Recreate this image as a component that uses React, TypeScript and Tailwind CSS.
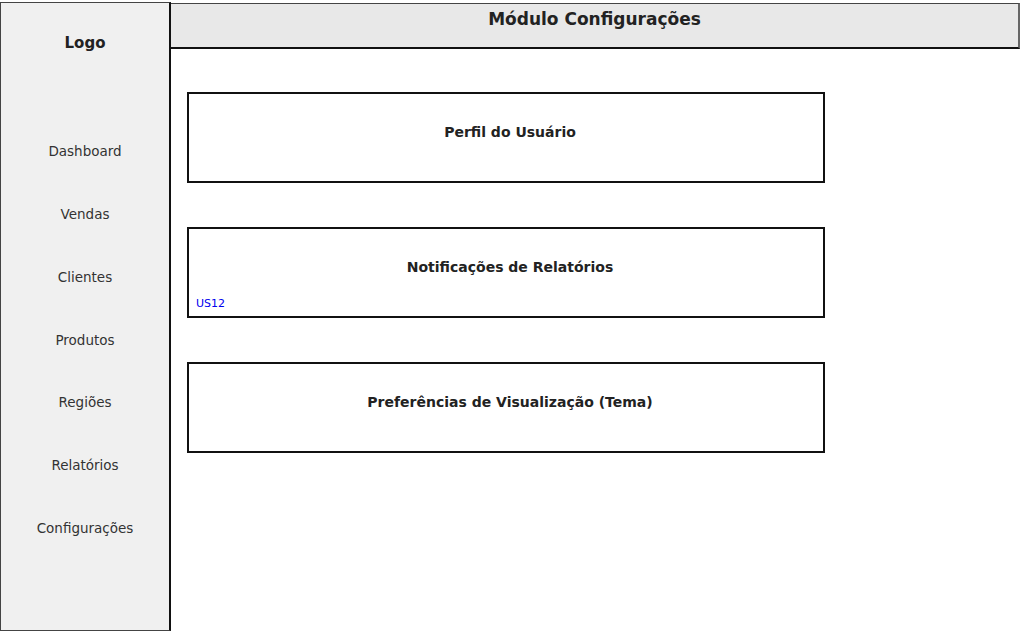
const navItems = [
  'Dashboard',
  'Vendas',
  'Clientes',
  'Produtos',
  'Regiões',
  'Relatórios',
  'Configurações',
];

function Card({ title, tag }: { title: string; tag?: string }) {
  return (
    <div className="w-[638px] h-[91px] border-2 border-[#111] bg-white flex flex-col">
      <div className="pt-[30px] pl-2 text-center text-[14px] leading-[17px] font-bold text-[#222]">
        {title}
      </div>
      {tag && (
        <div className="mt-[21px] pl-[7px] text-[11px] leading-[13px] text-[#0000ee]">
          {tag}
        </div>
      )}
    </div>
  );
}

export default function App() {
  return (
    <div className="w-[1020px] h-[631px] bg-white flex pt-[2px] overflow-hidden font-['DejaVu_Sans',sans-serif]">
      {/* Sidebar */}
      <aside className="w-[171px] shrink-0 h-full bg-[#f0f0f0] border border-[#444] border-r-2 border-r-[#111] flex flex-col items-center">
        <div className="mt-[31px] text-[15px] leading-[18px] font-bold text-[#222]">Logo</div>
        <nav className="mt-[68px] flex flex-col items-center w-full">
          {navItems.map((item) => (
            <div
              key={item}
              className="h-[62.8px] flex items-center justify-center text-[13.5px] text-[#333]"
            >
              {item}
            </div>
          ))}
        </nav>
      </aside>

      {/* Main */}
      <main className="flex-1 flex flex-col">
        <header className="h-[46px] mt-px bg-[#e8e8e8] border-t border-t-[#444] border-r-2 border-r-[#666] border-b-2 border-b-[#111] flex justify-center">
          <h1 className="mt-[5px] text-[17px] leading-[20px] font-bold text-[#222]">Módulo Configurações</h1>
        </header>
        <div className="pl-4 pt-[43px] flex flex-col gap-[44px]">
          <Card title="Perfil do Usuário" />
          <Card title="Notificações de Relatórios" tag="US12" />
          <Card title="Preferências de Visualização (Tema)" />
        </div>
      </main>
    </div>
  );
}
